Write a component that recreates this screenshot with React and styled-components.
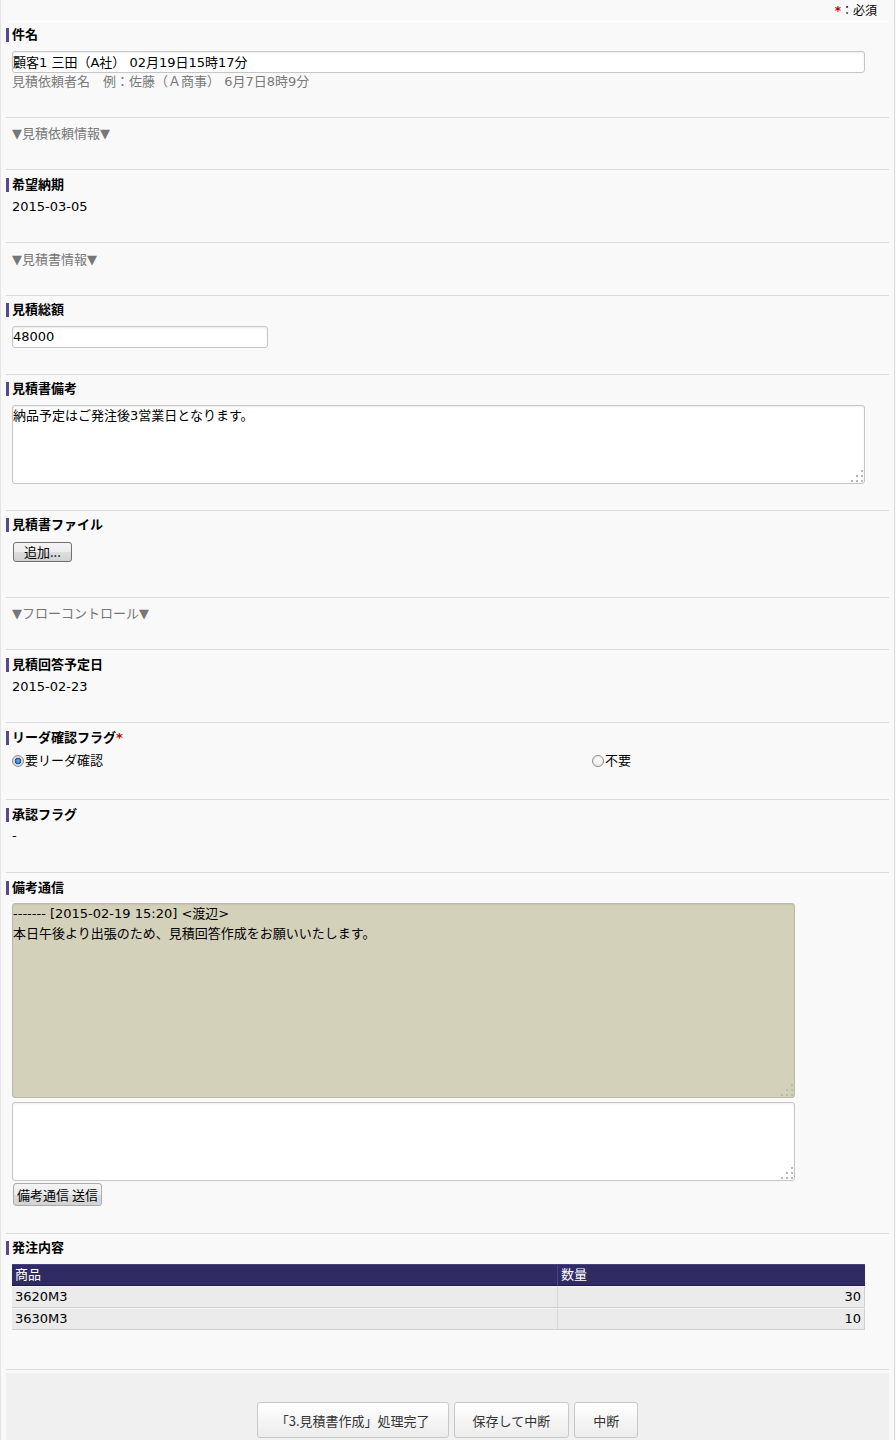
import React from 'react';
import styled, { createGlobalStyle } from 'styled-components';

const GlobalStyle = createGlobalStyle`
  html, body { margin: 0; padding: 0; background: #f9f9f9; }
  body {
    font-family: "DejaVu Sans", "Noto Sans CJK JP", sans-serif;
    font-size: 13px;
    line-height: 18px;
    color: #000;
  }
  * { box-sizing: border-box; }
`;

const Page = styled.div`
  width: 895px;
  min-height: 1440px;
  border-left: 1px solid #e4e4e4;
  border-right: 1px solid #dadada;
  padding: 0 5px;
  background: #f9f9f9;
`;

const TopBar = styled.div`
  height: 22px;
  border-bottom: 1px solid #ffffff;
  text-align: right;
  padding: 2px 12px 0 0;
  font-size: 12px;
  line-height: 19px;
`;

const Req = styled.span`
  color: #c00000;
  font-weight: bold;
`;

const Section = styled.section`
  border-bottom: 1px solid #dcdcdc;
  padding: ${p => p.$top ?? 6}px 0 ${p => p.$bottom ?? 26}px;
`;

const Label = styled.div`
  height: 18px;
  display: flex;
  align-items: center;
  font-weight: bold;
  margin-bottom: 3px;
`;

const LabelText = styled.span`
  display: inline-block;
  border-left: 3px solid #574a8c;
  padding-left: 3px;
  line-height: 14px;
`;

const Body = styled.div`
  display: flow-root;
  padding-left: 6px;
`;

const Toggle = styled.div`
  padding-left: 6px;
  color: #777;
  line-height: 18px;
`;

const Value = styled.div`
  line-height: 18px;
  margin-top: ${p => p.$mt ?? 0}px;
`;

const Hint = styled.div`
  color: #7a7a7a;
  line-height: 18px;
`;

const TextInput = styled.input`
  display: block;
  width: ${p => p.$w}px;
  height: 22px;
  margin: 4px 0 0;
  padding: 0 0 1px;
  border: 1px solid #c6c6c6;
  border-radius: 3px;
  background: #fff;
  box-shadow: inset 0 1px 2px rgba(0, 0, 0, 0.08);
  font: inherit;
  color: #000;
  outline: none;
`;

const AreaWrap = styled.div`
  position: relative;
  width: ${p => p.$w}px;
  margin-top: ${p => p.$mt ?? 0}px;
`;

const TextArea = styled.textarea`
  display: block;
  width: 100%;
  height: ${p => p.$h}px;
  margin: 0;
  padding: 0;
  border: 1px solid ${p => (p.$readonly ? '#bdbaa3' : '#c6c6c6')};
  border-radius: 3px;
  background: ${p => (p.$readonly ? '#d4d1bb' : '#fff')};
  box-shadow: inset 0 1px 2px rgba(0, 0, 0, 0.07);
  font: inherit;
  line-height: 20px;
  color: #000;
  resize: none;
  outline: none;
  overflow: hidden;
`;

const Grip = styled.svg`
  position: absolute;
  right: 2px;
  bottom: 2px;
  pointer-events: none;
`;

const ClassicButton = styled.button`
  display: block;
  height: ${p => p.$h}px;
  margin: ${p => p.$mt ?? 0}px 0 0 1px;
  padding: 0 ${p => p.$px ?? 10}px;
  border: 1px solid ${p => p.$border ?? '#707070'};
  border-radius: 3px;
  background: linear-gradient(#f4f4f4 0%, #ececec 50%, #dedede 51%, #d2d2d2 100%);
  font: inherit;
  font-family: "Noto Sans CJK JP", "DejaVu Sans", sans-serif;
  line-height: 16px;
  color: #000;
  cursor: pointer;
`;

const RadioRow = styled.div`
  display: grid;
  grid-template-columns: 580px 1fr;
  margin-top: 1px;
`;

const RadioLabel = styled.label`
  display: flex;
  align-items: center;
  height: 20px;
`;

const Radio = styled.input`
  appearance: none;
  -webkit-appearance: none;
  width: 12px;
  height: 12px;
  margin: 0 1px 0 0;
  border: 1px solid #8c8c8c;
  border-radius: 50%;
  background: radial-gradient(circle at 50% 40%, #ffffff 0, #e4e4e4 100%);
  &:checked {
    background: radial-gradient(circle at 50% 50%, #6fc0f5 0, #2a6fb8 2.4px, #1b4f86 3px, #d6d6d6 3.6px, #f6f6f6 100%);
  }
`;

const Table = styled.table`
  width: 853px;
  border-collapse: separate;
  border-spacing: 0;
  margin-top: 4px;
`;

const Th = styled.th`
  height: 22px;
  padding: 0 3px;
  background: #312b63;
  color: #fff;
  font-weight: normal;
  text-align: left;
  border-top: 1px solid #4a3f8f;
  border-bottom: 1px solid #1f1b45;
  border-left: ${p => (p.$first ? '0' : '1px solid #4b418f')};
  width: ${p => p.$w}px;
`;

const Td = styled.td`
  height: 22px;
  padding: 0 3px;
  background: #ebebeb;
  border-top: 1px solid #f7f7f7;
  border-bottom: 1px solid #cfcfcf;
  border-left: ${p => (p.$first ? '0' : '1px solid #d6d6d6')};
  border-right: ${p => (p.$last ? '1px solid #d0d0d0' : '0')};
  text-align: ${p => (p.$right ? 'right' : 'left')};
  line-height: 18px;
`;

const Footer = styled.div`
  margin-top: 3px;
  background: #f0f0f0;
  padding: 29px 0 30px;
  display: flex;
  justify-content: center;
  gap: 5px;
`;

const FooterButton = styled.button`
  height: 36px;
  padding: 0 18px;
  border: 1px solid #c8c8c8;
  border-radius: 3px;
  background: linear-gradient(#ffffff, #ececec);
  font-family: "Noto Sans CJK JP", sans-serif;
  font-size: 13px;
  color: #333;
  cursor: pointer;
`;

const GripIcon = () => (
  <Grip width="12" height="12" viewBox="0 0 12 12">
    <g fill="#b8b8b8">
      <rect x="10" y="0" width="2" height="2" />
      <rect x="5" y="5" width="2" height="2" />
      <rect x="10" y="5" width="2" height="2" />
      <rect x="0" y="10" width="2" height="2" />
      <rect x="5" y="10" width="2" height="2" />
      <rect x="10" y="10" width="2" height="2" />
    </g>
  </Grip>
);

const FieldLabel = ({ children, required }) => (
  <Label>
    <LabelText>
      {children}
      {required && <Req>*</Req>}
    </LabelText>
  </Label>
);

const rows = [
  { item: '3620M3', qty: 30 },
  { item: '3630M3', qty: 10 },
];

export default function App() {
  return (
    <>
      <GlobalStyle />
      <Page>
        <TopBar>
          <Req>*</Req>：必須
        </TopBar>

        <Section $top={4}>
          <FieldLabel>件名</FieldLabel>
          <Body>
            <TextInput $w={853} defaultValue="顧客1 三田（A社） 02月19日15時17分" />
            <Hint>見積依頼者名　例：佐藤（Ａ商事） 6月7日8時9分</Hint>
          </Body>
        </Section>

        <Section $top={7}>
          <Toggle>▼見積依頼情報▼</Toggle>
        </Section>

        <Section>
          <FieldLabel>希望納期</FieldLabel>
          <Body>
            <Value $mt={1}>2015-03-05</Value>
          </Body>
        </Section>

        <Section $top={8}>
          <Toggle>▼見積書情報▼</Toggle>
        </Section>

        <Section $top={5}>
          <FieldLabel>見積総額</FieldLabel>
          <Body>
            <TextInput $w={256} defaultValue="48000" />
          </Body>
        </Section>

        <Section $top={5}>
          <FieldLabel>見積書備考</FieldLabel>
          <Body>
            <AreaWrap $w={853} $mt={4}>
              <TextArea $h={79} defaultValue="納品予定はご発注後3営業日となります。" />
              <GripIcon />
            </AreaWrap>
          </Body>
        </Section>

        <Section $top={5} $bottom={35}>
          <FieldLabel>見積書ファイル</FieldLabel>
          <Body>
            <ClassicButton $h={20} $mt={5} $px={10}>追加...</ClassicButton>
          </Body>
        </Section>

        <Section $top={7}>
          <Toggle>▼フローコントロール▼</Toggle>
        </Section>

        <Section>
          <FieldLabel>見積回答予定日</FieldLabel>
          <Body>
            <Value $mt={1}>2015-02-23</Value>
          </Body>
        </Section>

        <Section $bottom={28}>
          <FieldLabel required>リーダ確認フラグ</FieldLabel>
          <Body>
            <RadioRow>
              <RadioLabel>
                <Radio type="radio" name="leader" defaultChecked />
                要リーダ確認
              </RadioLabel>
              <RadioLabel>
                <Radio type="radio" name="leader" />
                不要
              </RadioLabel>
            </RadioRow>
          </Body>
        </Section>

        <Section $bottom={27}>
          <FieldLabel>承認フラグ</FieldLabel>
          <Body>
            <Value>-</Value>
          </Body>
        </Section>

        <Section $bottom={27}>
          <FieldLabel>備考通信</FieldLabel>
          <Body>
            <AreaWrap $w={783} $mt={3}>
              <TextArea
                $h={195}
                $readonly
                readOnly
                defaultValue={'------- [2015-02-19 15:20] <渡辺>\n本日午後より出張のため、見積回答作成をお願いいたします。'}
              />
              <GripIcon />
            </AreaWrap>
            <AreaWrap $w={783} $mt={4}>
              <TextArea $h={79} defaultValue="" />
              <GripIcon />
            </AreaWrap>
            <ClassicButton $h={23} $mt={2} $px={3} $border="#acacac">備考通信 送信</ClassicButton>
          </Body>
        </Section>

        <Section $top={5} $bottom={39}>
          <FieldLabel>発注内容</FieldLabel>
          <Body>
            <Table>
              <thead>
                <tr>
                  <Th $first $w={545}>商品</Th>
                  <Th>数量</Th>
                </tr>
              </thead>
              <tbody>
                {rows.map(r => (
                  <tr key={r.item}>
                    <Td $first>{r.item}</Td>
                    <Td $right $last>{r.qty}</Td>
                  </tr>
                ))}
              </tbody>
            </Table>
          </Body>
        </Section>

        <Footer>
          <FooterButton>「3.見積書作成」処理完了</FooterButton>
          <FooterButton>保存して中断</FooterButton>
          <FooterButton>中断</FooterButton>
        </Footer>
      </Page>
    </>
  );
}
